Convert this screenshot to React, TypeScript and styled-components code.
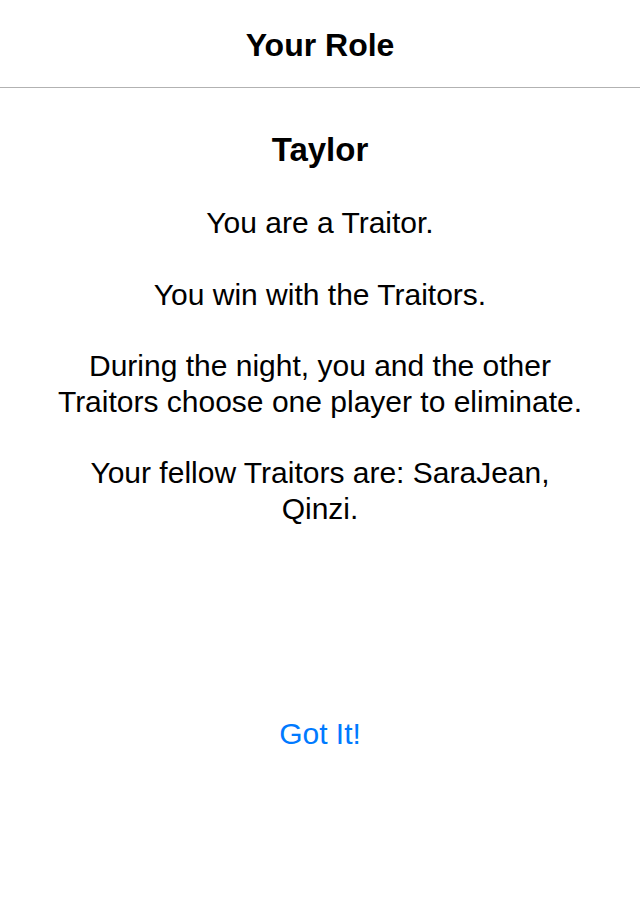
import React from "react";
import styled, { createGlobalStyle } from "styled-components";

const GlobalStyle = createGlobalStyle`
  html, body {
    margin: 0;
    padding: 0;
    background: #ffffff;
  }
  body {
    font-family: "Liberation Sans", Arial, sans-serif;
    color: #000000;
  }
`;

const Screen = styled.div`
  width: 640px;
  height: 920px;
  display: flex;
  flex-direction: column;
  background: #ffffff;
`;

const NavBar = styled.header`
  height: 88px;
  display: flex;
  align-items: center;
  justify-content: center;
  border-bottom: 1px solid #b2b2b2;
  box-sizing: border-box;
  flex-shrink: 0;
`;

const NavTitle = styled.h1`
  margin: 0;
  font-size: 32px;
  font-weight: 700;
  line-height: 40px;
  padding-top: 2px;
`;

const Content = styled.main`
  display: flex;
  flex-direction: column;
  align-items: center;
  padding-top: 42px;
`;

const PlayerName = styled.h2`
  margin: 0;
  font-size: 33px;
  font-weight: 700;
  line-height: 40px;
`;

const Description = styled.div`
  width: 540px;
  margin-top: 35px;
  display: flex;
  flex-direction: column;
  gap: 35.75px;
  text-align: center;
`;

const Paragraph = styled.p`
  margin: 0;
  font-size: 30px;
  line-height: 35.75px;
`;

const ActionButton = styled.button`
  margin-top: 189px;
  border: none;
  background: none;
  padding: 0;
  font-family: "Liberation Sans", Arial, sans-serif;
  font-size: 30px;
  line-height: 36px;
  color: #007aff;
  cursor: pointer;
`;

export default function App() {
  return (
    <>
      <GlobalStyle />
      <Screen>
        <NavBar>
          <NavTitle>Your Role</NavTitle>
        </NavBar>
        <Content>
          <PlayerName>Taylor</PlayerName>
          <Description>
            <Paragraph>You are a Traitor.</Paragraph>
            <Paragraph>You win with the Traitors.</Paragraph>
            <Paragraph>
              During the night, you and the other Traitors choose one player to
              eliminate.
            </Paragraph>
            <Paragraph>Your fellow Traitors are: SaraJean, Qinzi.</Paragraph>
          </Description>
          <ActionButton>Got It!</ActionButton>
        </Content>
      </Screen>
    </>
  );
}
